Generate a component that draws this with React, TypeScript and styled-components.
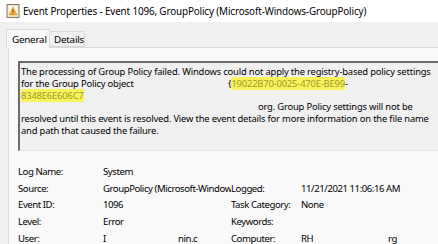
import React from "react";
import styled, { createGlobalStyle } from "styled-components";

const Global = createGlobalStyle`
  html, body { margin: 0; padding: 0; background: #f0f0f0; }
  body { width: 438px; height: 244px; overflow: hidden; font-family: "Noto Sans", "Open Sans", sans-serif; }
`;

const Window = styled.div`
  width: 438px;
  height: 244px;
  overflow: hidden;
  display: flex;
  flex-direction: column;
  background: #f0f0f0;
  color: #000;
  font-family: "Noto Sans", sans-serif;
`;

const TitleBar = styled.div`
  height: 22px;
  flex: none;
  background: #ffffff;
  display: flex;
  align-items: center;
  padding-left: 6px;
  gap: 3px;
  font-size: 9.9px;
  letter-spacing: -0.14px;
  white-space: nowrap;
`;

const Body = styled.div`
  flex: 1;
  padding: 7px 0 0 6px;
  display: flex;
  flex-direction: column;
`;

const TabStrip = styled.div`
  display: flex;
  align-items: flex-end;
  height: 18px;
  position: relative;
  z-index: 1;
`;

const Tab = styled.div<{ $active?: boolean }>`
  height: ${(p) => (p.$active ? 19 : 16)}px;
  width: ${(p) => (p.$active ? 44 : 36)}px;
  padding-left: ${(p) => (p.$active ? 5 : 4)}px;
  display: flex;
  align-items: center;
  font-size: 9.8px;
  letter-spacing: -0.2px;
  background: ${(p) => (p.$active ? "#f9f9f9" : "#f0f0f0")};
  border: 1px solid #d9d9d9;
  border-bottom: ${(p) => (p.$active ? "none" : "1px solid #d9d9d9")};
  margin-left: ${(p) => (p.$active ? 0 : -1)}px;
  box-sizing: border-box;
  margin-bottom: ${(p) => (p.$active ? -1 : 0)}px;
`;

const Panel = styled.div`
  flex: 1;
  margin-left: 2px;
  background: #f9f9f9;
  border-top: 1px solid #d9d9d9;
  border-left: 1px solid #d9d9d9;
  padding: 13px 0 0 9px;
  display: flex;
  flex-direction: column;
`;

const Description = styled.div`
  height: 90px;
  box-sizing: border-box;
  border-top: 2px solid #6b6b6b;
  border-left: 2px solid #6b6b6b;
  border-bottom: 1px solid #e3e3e3;
  background: #f0f0f0;
  padding: 3px 0 0 1px;
  font-size: 9.4px;
  letter-spacing: -0.17px;
  line-height: 11.75px;
  white-space: nowrap;
  overflow: hidden;
`;

const Line = styled.div``;

const Mark = styled.span`
  background: #fbf35c;
  color: #9c9a2a;
`;

const Lead = styled.span<{ $w: number }>`
  display: inline-block;
  width: ${(p) => p.$w}px;
  white-space: nowrap;
`;

const Fields = styled.div`
  margin-top: 12px;
  display: grid;
  grid-template-columns: 85px 128px 70px 1fr;
  grid-auto-rows: 16.75px;
  font-size: 9.6px;
  letter-spacing: -0.45px;
  align-items: center;
  white-space: nowrap;
`;

const Cell = styled.div`
  overflow: hidden;
  padding-right: 4px;
`;

const AppIcon = () => (
  <svg width="14" height="14" viewBox="0 0 14 14">
    <rect x="1" y="0.5" width="12" height="13" fill="#e8e2d0" stroke="#8a7a5a" />
    <rect x="2.5" y="2" width="9" height="10" fill="#fdfaf0" />
    <path d="M7 3 L11 11 L3 11 Z" fill="#f2b640" stroke="#c98a10" strokeWidth="0.6" />
    <rect x="6.4" y="5.5" width="1.2" height="3" fill="#c0392b" />
    <rect x="6.4" y="9.2" width="1.2" height="1.1" fill="#c0392b" />
  </svg>
);

export default function App() {
  return (
    <Window>
      <Global />
      <TitleBar>
        <AppIcon />
        <span>Event Properties - Event 1096, GroupPolicy (Microsoft-Windows-GroupPolicy)</span>
      </TitleBar>
      <Body>
        <TabStrip>
          <Tab $active>General</Tab>
          <Tab>Details</Tab>
        </TabStrip>
        <Panel>
          <Description>
            <Line>The processing of Group Policy failed. Windows could not apply the registry-based policy settings</Line>
            <Line>
              <Lead $w={207}>for the Group Policy object</Lead>
              {"{"}
              <Mark>19022B70-0025-470E-BE99</Mark>-
            </Line>
            <Line>
              <Mark>8348E6E606C7</Mark>
            </Line>
            <Line>
              <Lead $w={237} />org. Group Policy settings will not be
            </Line>
            <Line>resolved until this event is resolved. View the event details for more information on the file name</Line>
            <Line>and path that caused the failure.</Line>
          </Description>
          <Fields>
            <Cell>Log Name:</Cell>
            <Cell>System</Cell>
            <Cell />
            <Cell />
            <Cell>Source:</Cell>
            <Cell>GroupPolicy (Microsoft-Windows-GroupPolicy)</Cell>
            <Cell>Logged:</Cell>
            <Cell>11/21/2021 11:06:16 AM</Cell>
            <Cell>Event ID:</Cell>
            <Cell>1096</Cell>
            <Cell>Task Category:</Cell>
            <Cell>None</Cell>
            <Cell>Level:</Cell>
            <Cell>Error</Cell>
            <Cell>Keywords:</Cell>
            <Cell />
            <Cell>User:</Cell>
            <Cell>
              <Lead $w={75}>I</Lead>nin.c
            </Cell>
            <Cell>Computer:</Cell>
            <Cell>
              <Lead $w={87}>RH</Lead>rg
            </Cell>
          </Fields>
        </Panel>
      </Body>
    </Window>
  );
}
